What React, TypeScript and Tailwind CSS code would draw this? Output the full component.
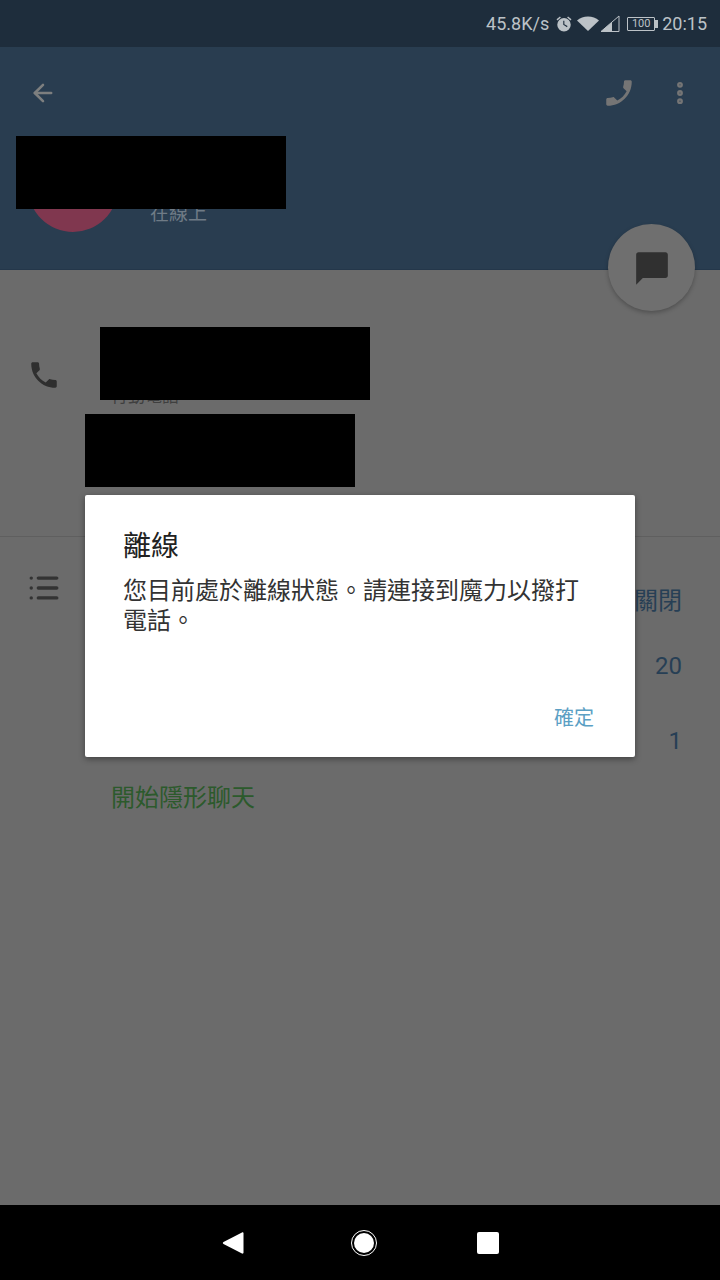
import { ArrowLeft, Phone, EllipsisVertical, List } from 'lucide-react'

const cjk = { fontFamily: 'Roboto, "Noto Sans CJK TC", sans-serif' }

function PhoneGlyph({ className }: { className: string }) {
  return (
    <svg className={className} viewBox="0 0 24 24" fill="currentColor">
      <path d="M6.62 10.79c1.44 2.83 3.76 5.14 6.59 6.59l2.2-2.2c.27-.27.67-.36 1.02-.24 1.12.37 2.33.57 3.57.57.55 0 1 .45 1 1V20c0 .55-.45 1-1 1-9.39 0-17-7.61-17-17 0-.55.45-1 1-1h3.5c.55 0 1 .45 1 1 0 1.25.2 2.45.57 3.57.11.35.03.74-.25 1.02l-2.2 2.2z" />
    </svg>
  )
}

function StatusBar() {
  return (
    <div className="h-[47px] bg-[#1e2d3c] flex items-center justify-end pr-[13px] text-[#bcc2c7] text-[18px]">
      <span>45.8K/s</span>
      {/* alarm */}
      <svg className="w-[18px] h-[18px] ml-[6px]" viewBox="0 0 24 24" fill="currentColor">
        <path d="M22 5.72l-4.6-3.86-1.29 1.53 4.6 3.86L22 5.72zM7.88 3.39L6.6 1.86 2 5.71l1.29 1.53 4.59-3.85zM12 4a9 9 0 100 18 9 9 0 000-18zm4 12.2L11 13V7.5h1.5v4.7l4.2 2.5-.7 1.5z" />
      </svg>
      {/* wifi */}
      <svg className="w-[24px] h-[18px] ml-[3px]" viewBox="0 0 24 18" fill="currentColor">
        <path d="M12 16L1 5.5C4 2.8 7.8 1.5 12 1.5s8 1.3 11 4L12 16z" />
      </svg>
      {/* signal */}
      <svg className="w-[20px] h-[18px]" viewBox="0 0 20 18">
        <path d="M1 16.5L19 1v15.5H1z" fill="none" stroke="currentColor" strokeWidth="1" />
        <path d="M1 16.5L12 7v9.5H1z" fill="currentColor" />
      </svg>
      {/* battery */}
      <div className="ml-[7px] flex items-center">
        <div className="w-[28px] h-[14px] border border-[#bcc2c7] rounded-[1px] flex items-center justify-center text-[11px] leading-none">100</div>
        <div className="w-[3px] h-[8px] bg-[#bcc2c7]" />
      </div>
      <span className="ml-[4px]">20:15</span>
    </div>
  )
}

function Header() {
  return (
    <div className="h-[223px] bg-[#293d50] border-b border-[#24374a]">
      <div className="flex items-center justify-between pl-[29px] pr-[26px] pt-[29px]">
        <ArrowLeft className="w-[28px] h-[28px] text-[#7d7f7f]" strokeWidth={2.2} />
        <div className="flex items-center gap-[30px]">
          <PhoneGlyph className="w-[34px] h-[34px] text-[#757575] scale-x-[-1] rotate-0" />
          <EllipsisVertical className="w-[28px] h-[28px] text-[#757575]" strokeWidth={3} />
        </div>
      </div>
      <div className="flex items-start pl-[28px] pt-[32px]">
        <div className="w-[90px] h-[90px] rounded-full bg-[#80374f]" />
        <span className="ml-[32px] mt-[59px] text-[19px] leading-[26px] text-[#6f7b86]">在線上</span>
      </div>
    </div>
  )
}

function Row({ label, value }: { label: string; value: string }) {
  return (
    <div className="h-[75px] flex items-center justify-between pl-[111px] pr-[38px] text-[24px]">
      <span className="text-[#3f3f3f]">{label}</span>
      <span className="text-[#273f55]">{value}</span>
    </div>
  )
}

export default function App() {
  return (
    <div className="relative w-[720px] h-[1280px] overflow-hidden flex flex-col bg-[#6b6b6b]" style={cjk}>
      <StatusBar />
      <Header />

      {/* Body */}
      <div className="flex-1">
        <div className="h-[267px] border-b border-[#5f5f5f] relative">
          <div className="flex pl-[27px] pt-[88px]">
            <PhoneGlyph className="w-[34px] h-[34px] text-[#2f2f2f]" />
            <span className="ml-[50px] mt-[26px] text-[17px] leading-[24px] text-[#3f3f3f]">行動電話</span>
          </div>
          <div className="pl-[111px] pt-[52px] text-[17px] leading-[24px] text-[#3f3f3f]">廣告識別ID</div>
        </div>
        <div className="flex pl-[27px] pt-[34px]">
          <List className="w-[34px] h-[34px] text-[#333333]" strokeWidth={2.4} />
        </div>
        <div className="-mt-[20px]">
          <div className="h-[43px] flex items-start justify-end pr-[38px] -mt-[20px] text-[24px] leading-[32px] text-[#273f55]">關閉</div>
          <Row label="" value="20" />
          <Row label="" value="1" />
          <div className="pl-[111px] pt-[2px] text-[24px] leading-[36px] text-[#2c5a2c]">開始隱形聊天</div>
        </div>
      </div>

      {/* Nav bar */}
      <div className="h-[75px] bg-black flex items-center justify-center text-white">
        <svg className="w-[22px] h-[24px]" viewBox="0 0 22 24" fill="currentColor">
          <path d="M20 1.5c.8-.4 1.5 0 1.5 1v19c0 1-.7 1.4-1.5 1L1.5 13c-.9-.5-.9-1.500 0-2L20 1.500z" />
        </svg>
        <div className="ml-[107px] w-[26px] h-[26px] rounded-full border border-white p-[2px]">
          <div className="w-full h-full rounded-full bg-white" />
        </div>
        <div className="ml-[100px] w-[22px] h-[22px] rounded-[2px] bg-white" />
      </div>

      {/* FAB */}
      <div className="absolute left-[608px] top-[224px] w-[87px] h-[87px] rounded-full bg-[#6f6f6f] shadow-[0_2px_4px_rgba(0,0,0,0.25)] flex items-center justify-center">
        <svg className="w-[40px] h-[40px] text-[#303030]" viewBox="0 0 24 24" fill="currentColor">
          <path d="M20 2.500H4c-1 0-1.500.7-1.500 1.500v18L6.500 18H20c.9 0 1.500-.7 1.500-1.500V4c0-.8-.6-1.500-1.500-1.500z" />
        </svg>
      </div>

      {/* Redactions */}
      <div className="absolute left-[16px] top-[136px] w-[270px] h-[73px] bg-black" />
      <div className="absolute left-[100px] top-[327px] w-[270px] h-[73px] bg-black" />
      <div className="absolute left-[85px] top-[414px] w-[270px] h-[73px] bg-black" />

      {/* Dialog */}
      <div className="absolute left-[85px] top-[495px] w-[550px] h-[262px] bg-white rounded-[2px] shadow-[0_2px_6px_rgba(0,0,0,0.4)] pl-[38px] pr-[40px] pt-[33px]">
        <h2 className="text-[28px] leading-[38px] text-[#222222]">離線</h2>
        <p className="mt-[10px] text-[24px] leading-[30px] text-[#333333]">您目前處於離線狀態。請連接到魔力以撥打電話。</p>
        <button className="absolute right-[41px] bottom-[24px] text-[20px] leading-[30px] text-[#5b9fc4]">確定</button>
      </div>
    </div>
  )
}
